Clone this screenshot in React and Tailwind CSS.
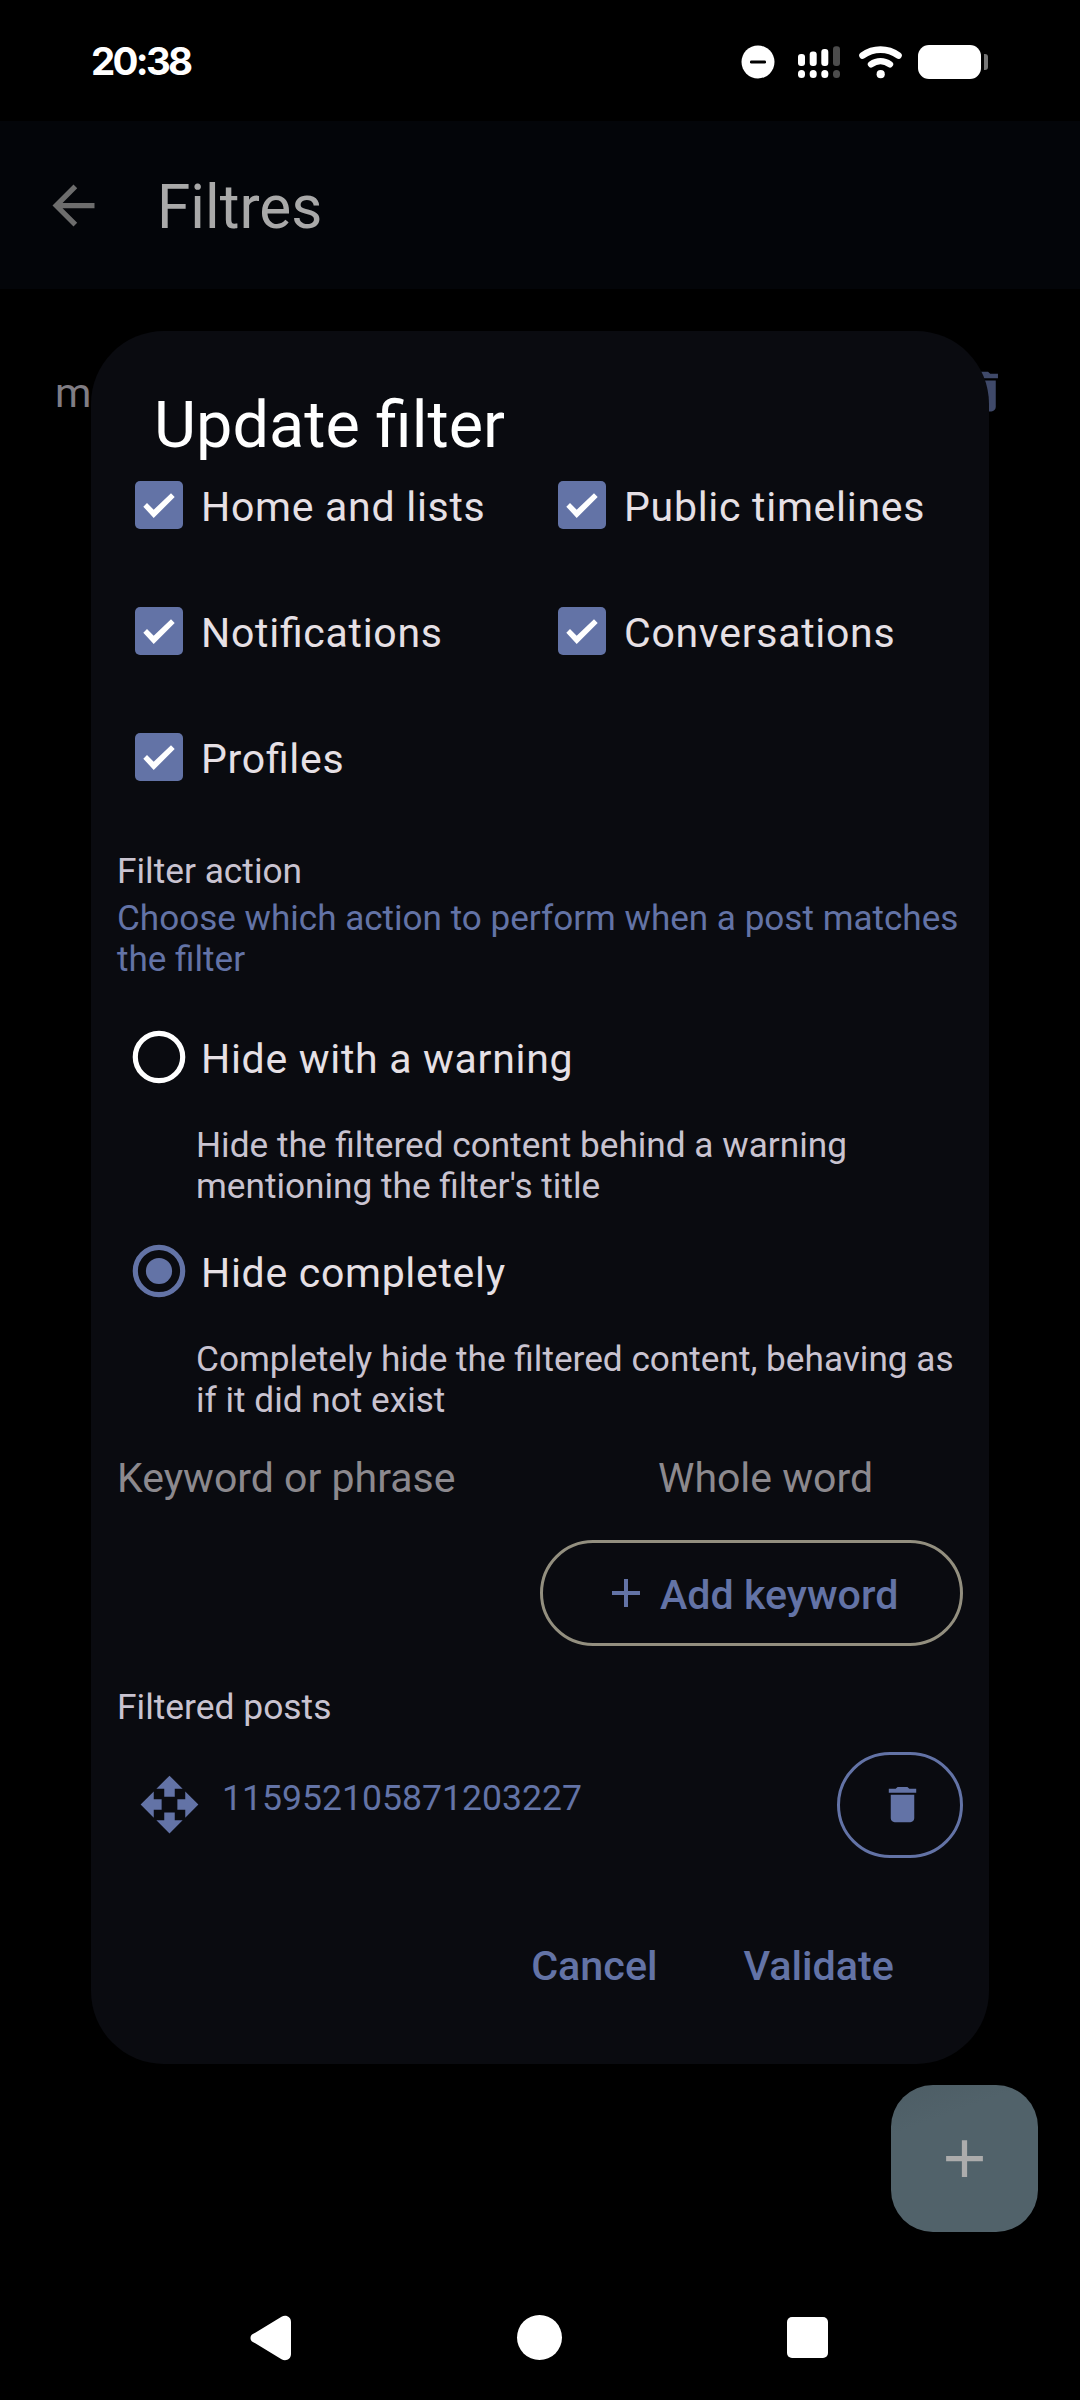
import { useState } from 'react'

const CONTEXTS = [
  { id: 'home', label: 'Home and lists' },
  { id: 'public', label: 'Public timelines' },
  { id: 'notifications', label: 'Notifications' },
  { id: 'thread', label: 'Conversations' },
  { id: 'account', label: 'Profiles' }
]

const ACTIONS = [
  {
    id: 'warn',
    label: 'Hide with a warning',
    lines: ['Hide the filtered content behind a warning', "mentioning the filter's title"]
  },
  {
    id: 'hide',
    label: 'Hide completely',
    lines: ['Completely hide the filtered content, behaving as', 'if it did not exist']
  }
]

const TrashIcon = ({ className }) => (
  <svg viewBox="0 0 24 24" fill="currentColor" className={className}>
    <path d="M6 19c0 1.1.9 2 2 2h8c1.1 0 2-.9 2-2V7H6v12zM19 4h-3.5l-1-1h-5l-1 1H5v2h14V4z" />
  </svg>
)

const PlusIcon = ({ className }) => (
  <svg viewBox="0 0 24 24" fill="currentColor" className={className}>
    <path d="M19 13h-6v6h-2v-6H5v-2h6V5h2v6h6v2z" />
  </svg>
)

const MoveIcon = ({ className }) => (
  <svg viewBox="0 0 24 24" fill="currentColor" className={className}>
    <path d="M10 9h4V6h3l-5-5-5 5h3v3zm-1 1H6V7l-5 5 5 5v-3h3v-4zm14 2l-5-5v3h-3v4h3v3l5-5zm-9 3h-4v3H7l5 5 5-5h-3v-3z" />
  </svg>
)

const StatusBar = () => (
  <div className="flex h-[121px] items-start justify-between pl-[91px] pr-[92px]">
    <div className="mt-[37px] text-[38.5px] leading-[48px] font-bold tracking-[-2.7px] text-white font-['Inter',sans-serif]">
      20:38
    </div>
    <div className="mt-[44px] flex h-9 items-center">
      <svg viewBox="0 0 34 34" className="h-[34px] w-[34px]">
        <circle cx="17" cy="17" r="16.5" fill="#fff" />
        <rect x="9" y="15.4" width="16" height="3.2" rx="1.4" fill="#000" />
      </svg>
      <svg viewBox="0 0 42 32" className="ml-[23px] h-8 w-[42px]" fill="#fff">
        <rect x="0" y="8" width="7" height="12" rx="3" />
        <rect x="11.7" y="5.5" width="7" height="14.5" rx="3" />
        <rect x="23.3" y="3" width="7" height="17" rx="3" />
        <rect x="35" y="0.3" width="7" height="19.7" rx="3" fill="#4c4c4c" />
        <rect x="0" y="24" width="7" height="8" rx="3.5" />
        <rect x="11.7" y="24" width="7" height="8" rx="3.5" />
        <rect x="23.3" y="24" width="7" height="8" rx="3.5" />
        <rect x="35" y="24" width="7" height="8" rx="3.5" fill="#4c4c4c" />
      </svg>
      <svg viewBox="0 0 44 34" className="ml-[19px] h-[34px] w-11" fill="none" stroke="#fff" strokeLinecap="round">
        <path d="M3.5 10.5C14.5 2.7 28.5 2.7 39.5 10.5" strokeWidth="6.6" />
        <path d="M12 19.3c5.8-4 13.2-4 19 0" strokeWidth="6.4" />
        <circle cx="21.7" cy="29.2" r="4.1" fill="#fff" stroke="none" />
      </svg>
      <div className="ml-[15px] h-[34px] w-[63px] rounded-[11px] bg-white" />
      <div className="ml-[3px] h-4 w-1 rounded-r-[3px] bg-[#757575]" />
    </div>
  </div>
)

const Checkbox = ({ checked, onChange, label }) => (
  <label className="flex h-[126px] items-center pl-[18px]">
    <input type="checkbox" checked={checked} onChange={onChange} className="sr-only" />
    <svg viewBox="0 0 48 48" className="h-12 w-12 shrink-0">
      <rect width="48" height="48" rx="5" fill="#6373a6" />
      {checked && <path d="M8.3 25.7 12 22 18.7 28.8 36 12.3 39.7 16 18.7 37z" fill="#fff" />}
    </svg>
    <span className="ml-[18px] pt-[4px] text-[41px] leading-[48px] tracking-[0.72px] whitespace-nowrap text-[#e6e0e5] [font-feature-settings:'liga'_1]">
      {label}
    </span>
  </label>
)

const Radio = ({ selected, onSelect, action }) => (
  <div>
    <label className="flex h-[126px] items-center pl-[15px]">
      <input type="radio" checked={selected} onChange={onSelect} className="sr-only" />
      <svg viewBox="0 0 54 54" className={selected ? 'h-[54px] w-[54px] text-[#6373a6]' : 'h-[54px] w-[54px] text-white'}>
        <circle cx="27" cy="27" r="23.7" fill="none" stroke="currentColor" strokeWidth="5.2" />
        {selected && <circle cx="27" cy="27" r="13.1" fill="currentColor" />}
      </svg>
      <span className="ml-[15px] pt-[4px] text-[41px] leading-[48px] tracking-[0.7px] whitespace-nowrap text-[#e6e0e5]">
        {action.label}
      </span>
    </label>
    <p className="mt-[5px] pl-[79px] text-[35.2px] leading-[41px] whitespace-nowrap text-[#c9c3d0]">
      {action.lines[0]}
      <br />
      {action.lines[1]}
    </p>
  </div>
)

const FilterDialog = () => {
  const [contexts, setContexts] = useState(CONTEXTS.map(c => c.id))
  const [action, setAction] = useState('hide')

  const toggleContext = (id) => {
    setContexts(prev => prev.includes(id) ? prev.filter(c => c !== id) : [...prev, id])
  }

  return (
    <div className="absolute top-[331px] left-[91px] flex h-[1733px] w-[898px] flex-col rounded-[73px] bg-[#0a0b10] px-[26px]">
      <h2 className="mt-[57px] ml-[37px] h-[54px] text-[64.8px] leading-[74px] text-white">Update filter</h2>

      <div className="grid grid-cols-2">
        {CONTEXTS.map(c => (
          <Checkbox
            key={c.id}
            label={c.label}
            checked={contexts.includes(c.id)}
            onChange={() => toggleContext(c.id)}
          />
        ))}
      </div>

      <h3 className="mt-[31px] text-[35.3px] leading-[41px] text-[#c9c3d0]">Filter action</h3>
      <p className="mt-[6px] text-[35.1px] leading-[41px] whitespace-nowrap text-[#6373a6]">
        Choose which action to perform when a post matches
        <br />
        the filter
      </p>

      <div className="mt-[14px] flex flex-col gap-px">
        {ACTIONS.map(a => (
          <Radio key={a.id} action={a} selected={action === a.id} onSelect={() => setAction(a.id)} />
        ))}
      </div>

      {/* Keywords */}
      <div className="mt-[33px] flex text-[41px] leading-[48px] text-[#8c898e]">
        <span className="w-[541px]">Keyword or phrase</span>
        <span>Whole word</span>
      </div>
      <button className="mt-[38px] flex h-[106px] w-[423px] items-center self-end rounded-[53px] border-3 border-[#938f7f] pl-[59px] text-[41.2px] leading-[48px] font-medium whitespace-nowrap text-[#6373a6]">
        <PlusIcon className="h-12 w-12" />
        <span className="ml-[10px] pt-[3px]">Add keyword</span>
      </button>

      <h3 className="mt-[41px] text-[35.4px] leading-[41px] text-[#c9c3d0]">Filtered posts</h3>
      <div className="mt-[24px] flex h-[106px] items-center pl-[21px] text-[#6373a6]">
        <MoveIcon className="mb-px h-[63px] w-[63px]" />
        <span className="ml-[21px] -mt-[13px] flex-1 text-[35.6px] leading-[41px]">115952105871203227</span>
        <button className="flex h-[106px] w-[126px] items-center justify-center rounded-[53px] border-3 border-[#6373a6] pb-px pl-[5px]">
          <TrashIcon className="h-[47px] w-[47px]" />
        </button>
      </div>

      <div className="mt-[84px] flex justify-end gap-[86px] pr-[69px] text-[41.3px] leading-[48px] font-medium text-[#6373a6]">
        <button>Cancel</button>
        <button>Validate</button>
      </div>
    </div>
  )
}

const NavBar = () => (
  <div className="flex h-[125px] items-center justify-between pr-[252px] pl-[250px]">
    <svg viewBox="0 0 42 46" className="h-[46px] w-[42px]">
      <path d="M2 19.6 31.5 1.7C36-.6 41 1.8 41 7v32c0 5.2-5 7.6-9.5 5.3L2 26.4c-2-1.6-2-5.2 0-6.8z" fill="#fff" />
    </svg>
    <div className="h-[45px] w-[45px] rounded-full bg-white" />
    <div className="h-[41px] w-[41px] rounded-[5px] bg-white" />
  </div>
)

const App = () => {
  return (
    <div className="relative flex h-[2400px] w-[1080px] flex-col overflow-hidden bg-black font-['Roboto',sans-serif]">
      <StatusBar />

      <header className="flex h-[168px] items-center bg-[#030509] pl-[42px]">
        <svg viewBox="0 0 24 24" fill="#6d6d6d" className="h-[63px] w-[63px]">
          <path d="M20 11H7.83l5.59-5.59L12 4l-8 8 8 8 1.41-1.41L7.83 13H20v-2z" />
        </svg>
        <h1 className="ml-[52px] pt-[5px] text-[60.3px] leading-[72px] text-[#a9a9a9]">Filtres</h1>
      </header>

      {/* Filter list */}
      <div className="flex flex-1 items-start justify-between pt-[76px] pr-[71px] pl-[55px]">
        <span className="mt-[4px] text-[41.5px] leading-[48px] text-[#807d84]">m</span>
        <TrashIcon className="h-[53px] w-[53px] text-[#3f4969]" />
      </div>

      <div className="mr-[42px] mb-[43px] flex h-[147px] w-[147px] items-center justify-center self-end rounded-[42px] bg-linear-160 from-[#4d5d65] to-[#51626a] to-25%">
        <PlusIcon className="h-[63px] w-[63px] text-[#acacac]" />
      </div>
      <NavBar />

      <FilterDialog />
    </div>
  )
}

export default App
